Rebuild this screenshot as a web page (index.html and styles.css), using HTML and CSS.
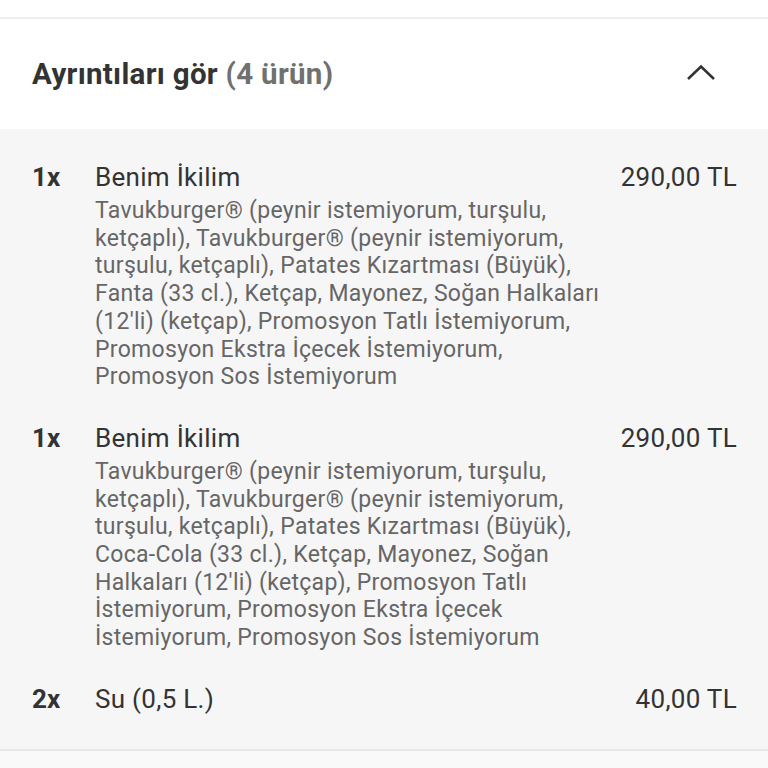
FILE: index.html
```html
<!DOCTYPE html>
<html lang="tr">
<head>
<meta charset="utf-8">
<link rel="stylesheet" href="styles.css">
</head>
<body>
<div class="topgap"></div>
<section class="details">
  <header class="details-header">
    <h2 class="title">Ayrıntıları gör <span class="count">(4 ürün)</span></h2>
    <svg class="chevron" width="32" height="20" viewBox="0 0 32 20" aria-hidden="true">
      <path d="M3 16 L16 3.5 L29 16" fill="none" stroke="#333" stroke-width="2.6" stroke-linecap="butt" stroke-linejoin="miter"/>
    </svg>
  </header>
  <div class="items">
    <div class="item">
      <div class="qty">1x</div>
      <div class="body">
        <div class="name">Benim İkilim</div>
        <div class="desc">Tavukburger® (peynir istemiyorum, turşulu, ketçaplı), Tavukburger® (peynir istemiyorum, turşulu, ketçaplı), Patates Kızartması (Büyük), Fanta (33 cl.), Ketçap, Mayonez, Soğan Halkaları (12'li) (ketçap), Promosyon Tatlı İstemiyorum, Promosyon Ekstra İçecek İstemiyorum, Promosyon Sos İstemiyorum</div>
      </div>
      <div class="price">290,00 TL</div>
    </div>
    <div class="item">
      <div class="qty">1x</div>
      <div class="body">
        <div class="name">Benim İkilim</div>
        <div class="desc">Tavukburger® (peynir istemiyorum, turşulu, ketçaplı), Tavukburger® (peynir istemiyorum, turşulu, ketçaplı), Patates Kızartması (Büyük), Coca-Cola (33 cl.), Ketçap, Mayonez, Soğan Halkaları (12'li) (ketçap), Promosyon Tatlı İstemiyorum, Promosyon Ekstra İçecek İstemiyorum, Promosyon Sos İstemiyorum</div>
      </div>
      <div class="price">290,00 TL</div>
    </div>
    <div class="item">
      <div class="qty">2x</div>
      <div class="body">
        <div class="name">Su (0,5 L.)</div>
      </div>
      <div class="price">40,00 TL</div>
    </div>
  </div>
</section>
<div class="bottom"></div>
</body>
</html>
```
FILE: styles.css
```css
html, body {
  margin: 0;
  padding: 0;
  background: #ffffff;
  font-family: Roboto, "Noto Sans", sans-serif;
  color: #333333;
}
.topgap {
  height: 17px;
  background: #ffffff;
  border-bottom: 2px solid #eeeeee;
}
.details-header {
  height: 110px;
  background: #ffffff;
  display: flex;
  align-items: center;
  justify-content: space-between;
  padding: 0 51px 0 32px;
}
.title {
  margin: 0;
  font-size: 29.5px;
  line-height: 36px;
  font-weight: 700;
  letter-spacing: 0.3px;
  color: #333333;
}
.count {
  color: #707070;
}
.chevron {
  display: block;
  margin-top: -2px;
}
.items {
  background: #f6f6f6;
  padding: 32px 31px 34px 32px;
  display: flex;
  flex-direction: column;
  gap: 31px;
  border-bottom: 2px solid #e8e8e8;
}
.item {
  display: flex;
  align-items: flex-start;
}
.qty {
  width: 63px;
  flex: none;
  font-size: 26px;
  line-height: 32px;
  font-weight: 700;
  color: #333333;
}
.body {
  flex: 1;
  min-width: 0;
}
.name {
  font-size: 26px;
  line-height: 32px;
  letter-spacing: 0.3px;
  color: #333333;
}
.desc {
  max-width: 506px;
  margin-top: 4px;
  font-size: 23px;
  line-height: 27.7px;
  letter-spacing: 0.3px;
  color: #666666;
}
.price {
  flex: none;
  font-size: 26px;
  line-height: 32px;
  letter-spacing: 0.3px;
  color: #333333;
}
.bottom {
  height: 40px;
  background: #f9f9f9;
}
```
